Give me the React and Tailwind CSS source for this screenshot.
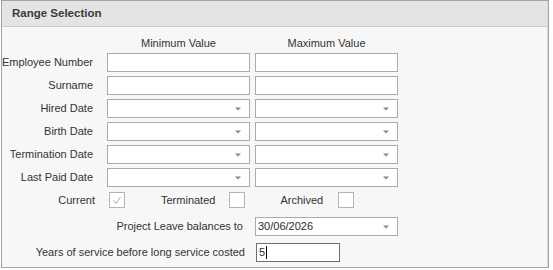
import React from 'react'

const font = { fontFamily: '"Liberation Sans", Arial, sans-serif' }

function Arrow() {
  return (
    <svg width="6" height="4" viewBox="0 0 6 4" className="absolute right-[8px] top-1/2 -translate-y-1/2">
      <polygon points="0,0.5 6,0.5 3,3.5" fill="#8a8a8a" />
    </svg>
  )
}

function Field({ combo, value, focused, width = 'w-[143px]' }) {
  return (
    <div
      className={`relative h-[19px] ${width} bg-white border ${
        focused ? 'border-[#707070]' : 'border-[#ababab]'
      } flex items-center pl-[2px] text-[11px] text-[#2b2b2b]`}
    >
      {value}
      {focused && <span className="w-px h-[13px] bg-black ml-px" />}
      {combo && <Arrow />}
    </div>
  )
}

function Check({ checked }) {
  return (
    <div className="w-[16px] h-[16px] bg-white border border-[#b4b4b4] flex items-center justify-center">
      {checked && (
        <svg width="10" height="9" viewBox="0 0 10 9">
          <path d="M1.5 4.5 L4 7.5 L8.5 1" fill="none" stroke="#a9a9a9" strokeWidth="1" />
        </svg>
      )}
    </div>
  )
}

function Label({ w, children }) {
  return (
    <div className={`${w} shrink-0 flex justify-end whitespace-nowrap`}>
      <span className="shrink-0">{children}</span>
    </div>
  )
}

const ROWS = [
  { label: 'Employee Number', combo: false },
  { label: 'Surname', combo: false },
  { label: 'Hired Date', combo: true },
  { label: 'Birth Date', combo: true },
  { label: 'Termination Date', combo: true },
  { label: 'Last Paid Date', combo: true },
]

export default function App() {
  return (
    <div className="w-[553px] h-[270px] bg-white" style={font}>
      <div className="ml-px w-[548px] h-[268px] border border-[#a4a4a4] bg-[#f7f7f7]">
        <div className="h-full border-r border-[#d9d9d9] flex flex-col">
          {/* Header */}
          <div className="h-[26px] shrink-0 bg-[#e4e4e4] border-b border-[#cdcdcd] flex items-center pl-[10px] text-[11.5px] font-bold text-[#3a3a3a]">
            Range Selection
          </div>

          <div className="flex flex-col text-[11px] text-[#333333] pt-[10px]">
            {/* Column heads */}
            <div className="flex h-[13px] items-center">
              <div className="w-[105px]" />
              <div className="w-[143px] text-center">Minimum Value</div>
              <div className="w-[5px]" />
              <div className="w-[143px] text-center">Maximum Value</div>
            </div>

            {/* Range rows */}
            <div className="flex flex-col gap-[4px] mt-[3px]">
              {ROWS.map((r) => (
                <div key={r.label} className="flex items-center">
                  <Label w="w-[91px]">{r.label}</Label>
                  <div className="ml-[14px] flex gap-[5px]">
                    <Field combo={r.combo} />
                    <Field combo={r.combo} />
                  </div>
                </div>
              ))}
            </div>

            {/* Status checkboxes */}
            <div className="flex items-center mt-[5px] h-[16px]">
              <Label w="w-[93px]">Current</Label>
              <div className="ml-[14px]">
                <Check checked />
              </div>
              <div className="ml-[36px]">Terminated</div>
              <div className="ml-[14px]">
                <Check />
              </div>
              <div className="ml-[35px]">Archived</div>
              <div className="ml-[15px]">
                <Check />
              </div>
            </div>

            {/* Project leave */}
            <div className="flex items-center mt-[9px]">
              <Label w="w-[241px]">Project Leave balances to</Label>
              <div className="ml-[12px]">
                <Field combo value="30/06/2026" />
              </div>
            </div>

            {/* Years of service */}
            <div className="flex items-center mt-[7px]">
              <Label w="w-[243px]">Years of service before long service costed</Label>
              <div className="ml-[11px]">
                <Field value="5" focused width="w-[84px]" />
              </div>
            </div>
          </div>
        </div>
      </div>
    </div>
  )
}
